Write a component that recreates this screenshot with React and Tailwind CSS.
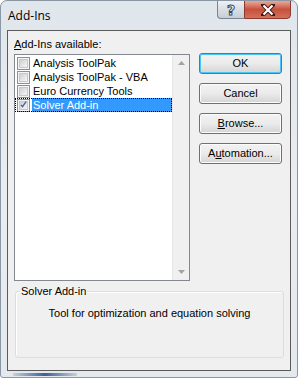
import React, { useState } from 'react';

const items = [
  { name: 'Analysis ToolPak', checked: false },
  { name: 'Analysis ToolPak - VBA', checked: false },
  { name: 'Euro Currency Tools', checked: false },
  { name: 'Solver Add-in', checked: true },
];

const font = "font-['Liberation_Sans',Arial,sans-serif]";

const CheckBox = ({ checked }) => (
  <span className="w-[13px] h-[13px] border border-[#8e8f8f] bg-[#f4f4f4] flex items-center justify-center shrink-0">
    <span className="w-[9px] h-[9px] border border-[#c8c8c8] bg-gradient-to-br from-[#cbcfd5] to-[#f6f6f6] flex items-center justify-center">
      {checked && (
        <svg width="11" height="11" viewBox="0 0 11 11" className="-mt-[2px]">
          <path d="M1.5 6 L4 9 L9.5 1" fill="none" stroke="#4a5f97" strokeWidth="2" />
        </svg>
      )}
    </span>
  </span>
);

const Arrow = ({ up }) => (
  <svg width="7" height="4" viewBox="0 0 7 4">
    <path d={up ? 'M0 4 L3.5 0 L7 4 Z' : 'M0 0 L3.5 4 L7 0 Z'} fill="#a3a3a3" />
  </svg>
);

const Button = ({ children, primary }) => (
  <button
    className={`w-[83px] h-[21px] rounded-[3px] border text-[11px] text-black flex items-center justify-center bg-gradient-to-b from-[#f2f2f2] via-[#ebebeb] to-[#d4d4d4] ${
      primary ? 'border-[#3c7fb1] shadow-[inset_0_0_0_1px_#48c6f2]' : 'border-[#707070] shadow-[inset_0_0_0_1px_#fcfcfc]'
    }`}
  >
    {children}
  </button>
);

export default function App() {
  const [selected] = useState(3);
  return (
    <div className={`w-[298px] h-[378px] flex flex-col rounded-t-[7px] rounded-b-[3px] border border-[#8a96a3] bg-gradient-to-b from-[#dfe6ec] via-[#e9edf1] to-[#e4e9ee] overflow-hidden ${font}`}>
      <div className="h-[29px] flex shrink-0">
        <div className="pl-[7px] pt-[6px] text-[12px] text-black font-['Open_Sans',sans-serif]">Add-Ins</div>
        <div className="ml-auto flex mr-[6px] -mt-px">
          <div className="w-[27px] h-[19px] rounded-bl-[4px] border border-[#7a8593] border-r-0 bg-gradient-to-b from-[#eef1f4] via-[#d9dee4] to-[#c8ced6] flex items-center justify-center">
            <span className="text-[14px] leading-none font-bold text-white [-webkit-text-stroke:1px_#3e4651] font-['DejaVu_Sans',sans-serif]">?</span>
          </div>
          <div className="w-[47px] h-[19px] rounded-br-[4px] border border-[#8a3a2e] bg-gradient-to-b from-[#e9a999] via-[#c7503c] to-[#d4705a] flex items-center justify-center">
            <svg width="14" height="12" viewBox="0 0 14 12">
              <path d="M2 1 L12 11 M12 1 L2 11" stroke="#3c1a14" strokeWidth="4" strokeLinecap="square" />
              <path d="M2.5 1.5 L11.5 10.5 M11.5 1.5 L2.5 10.5" stroke="#ffffff" strokeWidth="2.2" />
            </svg>
          </div>
        </div>
      </div>
      <div className="mx-[6px] h-[341px] border border-[#5b5b5b] bg-[#f0f0f0] flex flex-col shrink-0">
        <div className="flex pl-[6px] pt-[6px]">
          <div className="w-[176px] flex flex-col">
            <div className="text-[11px] leading-[14px] text-black">
              <span className="underline">A</span>dd-Ins available:
            </div>
            <div className="mt-[3px] h-[227px] border border-[#828790] bg-white flex">
              <div className="flex-1 pt-px">
                {items.map((it, i) => (
                  <div
                    key={it.name}
                    className={`h-[14px] flex items-center pl-[2px] ${i === selected ? 'outline outline-1 outline-dotted outline-black -outline-offset-1' : ''}`}
                  >
                    <CheckBox checked={it.checked} />
                    <span
                      className={`ml-[2px] flex-1 h-[14px] text-[11px] leading-[14px] pl-px ${
                        i === selected ? 'bg-[#3399ff] text-white' : 'text-black'
                      }`}
                    >
                      {it.name}
                    </span>
                  </div>
                ))}
              </div>
              <div className="w-[17px] bg-[#f0f0f0] border-l border-[#e6e6e6] flex flex-col justify-between items-center py-[6px]">
                <Arrow up />
                <Arrow />
              </div>
            </div>
          </div>
          <div className="ml-[9px] pt-[16px] flex flex-col gap-[9px]">
            <Button primary>OK</Button>
            <Button>Cancel</Button>
            <Button>
              <span><span className="underline">B</span>rowse...</span>
            </Button>
            <Button>
              <span>A<span className="underline">u</span>tomation...</span>
            </Button>
          </div>
        </div>
        <fieldset className="mt-[4px] ml-[7px] w-[269px] h-[73px] border border-[#d5dfe5] rounded-[3px] shadow-[inset_1px_1px_0_#ffffff] px-[4px]">
          <legend className="text-[11px] leading-[12px] px-px text-black">Solver Add-in</legend>
          <div className="text-[11px] text-center text-black mt-[8px]">Tool for optimization and equation solving</div>
        </fieldset>
      </div>
      <div className="flex-1 flex items-end pl-[12px]">
        <div className="w-[64px] h-[3px] mb-[1px] bg-gradient-to-r from-[#c8d0da] via-[#3d5f98] to-[#c8d0da]" />
      </div>
    </div>
  );
}
